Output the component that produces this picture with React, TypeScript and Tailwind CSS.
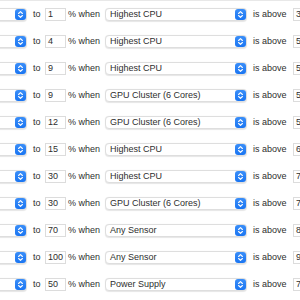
import React from "react";

const rows: [string, string, string][] = [
  ["1", "Highest CPU", "3"],
  ["4", "Highest CPU", "5"],
  ["9", "Highest CPU", "5"],
  ["9", "GPU Cluster (6 Cores)", "5"],
  ["12", "GPU Cluster (6 Cores)", "5"],
  ["15", "Highest CPU", "6"],
  ["30", "Highest CPU", "7"],
  ["30", "GPU Cluster (6 Cores)", "7"],
  ["70", "Any Sensor", "8"],
  ["100", "Any Sensor", "9"],
  ["50", "Power Supply", "7"],
];

function Stepper() {
  return (
    <div className="w-[11px] h-[11px] rounded-[3px] bg-gradient-to-b from-[#3a8ef8] to-[#1975f2] flex items-center justify-center shrink-0">
      <svg width="11" height="11" viewBox="0 0 11 11" fill="none">
        <path d="M3.6 4.5 L5.5 2.6 L7.4 4.5" stroke="white" strokeWidth="1.1" strokeLinecap="round" strokeLinejoin="round" />
        <path d="M3.6 6.5 L5.5 8.4 L7.4 6.5" stroke="white" strokeWidth="1.1" strokeLinecap="round" strokeLinejoin="round" />
      </svg>
    </div>
  );
}

function Popup({ className, label }: { className: string; label?: string }) {
  return (
    <div
      className={
        "h-[13px] rounded-[4px] bg-white border border-[#dedede] shadow-[0_0.5px_1px_rgba(0,0,0,0.10)] flex items-center justify-between box-border shrink-0 " +
        className
      }
    >
      <span className="pl-[4px] text-[9px] leading-none text-[#2e2e2e] whitespace-nowrap">{label ?? ""}</span>
      <Stepper />
    </div>
  );
}

function Field({ value, className }: { value: string; className: string }) {
  return (
    <div
      className={
        "h-[13px] bg-white border border-[#dcdcdc] box-border flex items-center pl-[2px] text-[9px] leading-none text-[#2e2e2e] shrink-0 " +
        className
      }
    >
      {value}
    </div>
  );
}

export default function App() {
  return (
    <div
      className="w-[300px] h-[300px] overflow-hidden bg-white border-t border-[#e8e8e8] box-border"
      style={{ fontFamily: '"Liberation Sans", Arial, sans-serif' }}
    >
      <div className="flex flex-col">
        {rows.map(([a, b, c], i) => (
          <div key={i} className="h-[27px] flex items-center shrink-0">
            <Popup className="ml-[-40px] w-[67px]" />
            <span className="w-[18px] pl-[6px] text-[9px] leading-none text-[#2e2e2e] shrink-0">to</span>
            <Field value={a} className="w-[21px]" />
            <span className="w-[39px] pl-[2px] text-[9px] leading-none text-[#2e2e2e] whitespace-nowrap shrink-0">% when</span>
            <Popup className="w-[142px]" label={b} />
            <span className="w-[46px] pl-[6px] text-[9px] leading-none text-[#2e2e2e] whitespace-nowrap shrink-0">is above</span>
            <Field value={c} className="w-[40px]" />
          </div>
        ))}
      </div>
    </div>
  );
}
